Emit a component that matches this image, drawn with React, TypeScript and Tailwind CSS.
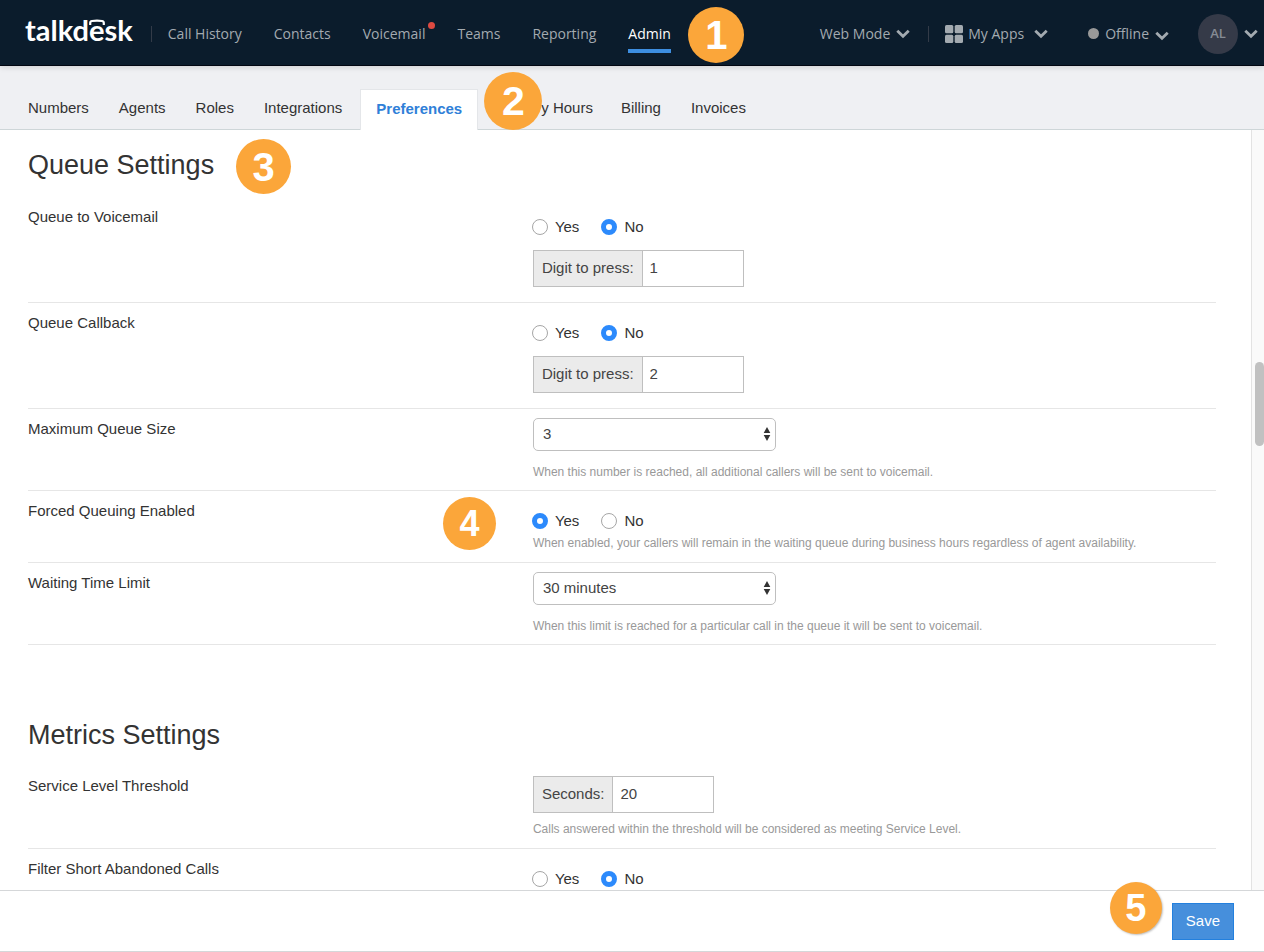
import React, { useId, useState } from "react";

function Chevron() {
  return (
    <svg viewBox="0 0 14 10" className="h-[10px] w-[14px] shrink-0" fill="none" stroke="#a3aab0" strokeWidth="2.800" aria-hidden="true">
      <path d="M1.300 1.800 7 7.300l5.700-5.500" />
    </svg>
  );
}

function Step({ n, className }: { n: number; className: string }) {
  return (
    <span className={`absolute z-10 flex items-center justify-center rounded-full bg-[#fba63a] font-['Liberation_Sans',sans-serif] font-bold leading-none text-white ${className}`}>
      {n}
    </span>
  );
}

function Logo() {
  return (
    <a href="#home" className="flex pb-[7px] font-['Lato',sans-serif] text-[29px] font-bold leading-8 text-white">
      talkd
      <span className="relative">
        e
        <svg viewBox="0 0 16 7" className="absolute left-0 top-[5px] h-[7px] w-4" fill="none" stroke="#fff" strokeWidth="2.200" aria-hidden="true">
          <path d="M1.200 6V4Q1.200 2.200 3 2.000Q8 1.400 13 2.000Q14.800 2.200 14.800 4V6" />
        </svg>
      </span>
      sk
    </a>
  );
}

function Header() {
  return (
    <header className="relative z-10 flex h-[66px] shrink-0 items-center border-b border-[#020712] bg-[#0b1c2c] pl-[25px] pr-[6px] pt-[2px] font-['Open_Sans',sans-serif] text-sm text-[#a3aab0] shadow-[0_1px_6px_rgba(0,0,0,0.15)]">
      <Logo />
      <span className="ml-[18px] mr-4 h-4 w-px bg-[#333b48]" />
      <nav className="flex items-center gap-8 whitespace-nowrap">
        <a href="#history">Call History</a>
        <a href="#contacts">Contacts</a>
        <a href="#voicemail" className="relative">
          Voicemail
          <span className="absolute -right-[10px] -top-[2px] size-[7px] rounded-full bg-[#dd4a41]" />
        </a>
        <a href="#teams">Teams</a>
        <a href="#reporting">Reporting</a>
        <a href="#admin" className="relative text-white">
          Admin
          <span className="absolute inset-x-0 -bottom-[9px] h-1 bg-[#3d8ee0]" />
          <Step n={1} className="-top-[17px] left-[60px] size-14 text-[40px]" />
        </a>
      </nav>
      <div className="ml-auto flex items-center whitespace-nowrap">
        <button type="button" className="flex items-center gap-[6px]">
          Web Mode <Chevron />
        </button>
        <span className="ml-[18px] mr-4 h-4 w-px bg-[#333b48]" />
        <button type="button" className="flex items-center">
          <svg viewBox="0 0 18 18" className="mr-[5px] size-[18px]" fill="#a3aab0" aria-hidden="true">
            <rect width="8.300" height="8.300" rx="1.500" />
            <rect x="9.700" width="8.300" height="8.300" rx="1.500" />
            <rect y="9.700" width="8.300" height="8.300" rx="1.500" />
            <rect x="9.700" y="9.700" width="8.300" height="8.300" rx="1.500" />
          </svg>
          <span className="mr-[10px]">My Apps</span>
          <Chevron />
        </button>
        <button type="button" className="ml-10 flex items-center">
          <span className="mr-[6px] size-[11px] rounded-full bg-[#999]" />
          <span className="mr-[6px]">Offline</span>
          <span className="pt-1"><Chevron /></span>
        </button>
        <button type="button" className="ml-[29px] flex items-center gap-[6px]">
          <span className="flex size-10 items-center justify-center rounded-full bg-[#353a48] text-[13px] font-semibold text-[#858b94]">AL</span>
          <Chevron />
        </button>
      </div>
    </header>
  );
}

function Tabs() {
  const tab = "px-[15px] pb-[11px]";
  return (
    <nav className="relative flex h-16 shrink-0 items-end whitespace-nowrap border-b border-[#ced6d8] bg-[#eff0f3] pl-[13px] text-[15px] leading-5 text-[#333]">
      <a href="#numbers" className={tab}>Numbers</a>
      <a href="#agents" className={tab}>Agents</a>
      <a href="#roles" className={tab}>Roles</a>
      <a href="#integrations" className={tab}>Integrations</a>
      <a href="#preferences" aria-current="page" className="relative -mb-px ml-[3px] border border-b-0 border-[#e4e6e9] bg-white px-[15px] pb-[11px] pt-[9px] font-bold text-[#2f80d8]">
        Preferences
        <Step n={2} className="-top-[18px] left-[123px] size-[58px] text-[41px]" />
      </a>
      <a href="#hours" className="pb-[11px] pl-[63px] pr-[13px]">y Hours</a>
      <a href="#billing" className={tab}>Billing</a>
      <a href="#invoices" className={tab}>Invoices</a>
    </nav>
  );
}

function Row({ label, children, className = "" }: { label: string; children: React.ReactNode; className?: string }) {
  return (
    <div className={`grid grid-cols-[17fr_23fr] border-b border-[#e6e6e6] ${className}`}>
      <h3 className="pt-[10px] text-[15px] leading-5">{label}</h3>
      <div>{children}</div>
    </div>
  );
}

function YesNo({ label, initial }: { label: string; initial: "Yes" | "No" }) {
  const name = useId();
  const [value, setValue] = useState<string>(initial);
  return (
    <div role="radiogroup" aria-label={label} className="-ml-px flex gap-[22px] pt-5 text-[15px] leading-5">
      {["Yes", "No"].map((option) => (
        <label key={option} className="flex items-center gap-[7px]">
          <input
            type="radio"
            name={name}
            checked={value === option}
            onChange={() => setValue(option)}
            className="size-4 appearance-none rounded-full border border-[#a6a6a6] bg-white checked:border-[5px] checked:border-[#2c8afc]"
          />
          {option}
        </label>
      ))}
    </div>
  );
}

function Field({ label, value }: { label: string; value: string }) {
  const id = useId();
  return (
    <div className="flex h-[37px] text-[15px] text-[#444]">
      <label htmlFor={id} className="flex items-center border border-[#bfbfbf] bg-[#ebebeb] px-2">{label}</label>
      <input id={id} defaultValue={value} className="w-[101px] border border-l-0 border-[#bfbfbf] bg-white px-[7px]" />
    </div>
  );
}

function Choice({ label, options }: { label: string; options: string[] }) {
  return (
    <div className="relative mt-[9px] w-[243px]">
      <select aria-label={label} className="block h-[33px] w-full appearance-none rounded-[5px] border border-[#bfbfbf] bg-white px-[9px] text-[15px] text-[#444]">
        {options.map((o) => <option key={o}>{o}</option>)}
      </select>
      <svg viewBox="0 0 8 14" className="pointer-events-none absolute right-[5px] top-[9px] h-[14px] w-2" fill="#333" aria-hidden="true">
        <path d="M4 0 7.300 6H.7zM4 14 .7 8h6.600z" />
      </svg>
    </div>
  );
}

function Hint({ children, className = "" }: { children: React.ReactNode; className?: string }) {
  return <p className={`text-xs leading-4 text-[#999] ${className}`}>{children}</p>;
}

export default function App() {
  return (
    <div className="flex h-screen flex-col overflow-hidden bg-white font-['Liberation_Sans',sans-serif] text-[#333]">
      <Header />
      <Tabs />
      <div className="flex min-h-0 flex-1">
        <main className="min-w-0 flex-1 overflow-hidden pl-7 pr-[35px]">
          <section className="pb-[69px]">
            <h2 className="flex h-[67px] items-center pt-[3px] text-[27px] leading-8">
              <span className="relative">
                Queue Settings
                <Step n={3} className="-top-[10px] left-[208px] size-[55px] text-[40px]" />
              </span>
            </h2>
            <Row label="Queue to Voicemail">
              <YesNo label="Queue to Voicemail" initial="No" />
              <div className="pb-[15px] pt-[13px]"><Field label="Digit to press:" value="1" /></div>
            </Row>
            <Row label="Queue Callback">
              <YesNo label="Queue Callback" initial="No" />
              <div className="pb-[15px] pt-[13px]"><Field label="Digit to press:" value="2" /></div>
            </Row>
            <Row label="Maximum Queue Size">
              <Choice label="Maximum Queue Size" options={["3", "5", "10"]} />
              <Hint className="pb-[10px] pt-[13px]">When this number is reached, all additional callers will be sent to voicemail.</Hint>
            </Row>
            <Row label="Forced Queuing Enabled">
              <div className="relative">
                <Step n={4} className="-left-[90px] top-[6px] size-[53px] text-[36px]" />
                <YesNo label="Forced Queuing Enabled" initial="Yes" />
              </div>
              <Hint className="pb-[11px] pt-1">When enabled, your callers will remain in the waiting queue during business hours regardless of agent availability.</Hint>
            </Row>
            <Row label="Waiting Time Limit">
              <Choice label="Waiting Time Limit" options={["30 minutes", "60 minutes"]} />
              <Hint className="pb-[10px] pt-[13px]">When this limit is reached for a particular call in the queue it will be sent to voicemail.</Hint>
            </Row>
          </section>
          <section>
            <h2 className="pb-[15px] pt-[5px] text-[27px] leading-8">Metrics Settings</h2>
            <Row label="Service Level Threshold">
              <div className="pt-[10px]"><Field label="Seconds:" value="20" /></div>
              <Hint className="pb-[11px] pt-2">Calls answered within the threshold will be considered as meeting Service Level.</Hint>
            </Row>
            <Row label="Filter Short Abandoned Calls" className="pb-8">
              <YesNo label="Filter Short Abandoned Calls" initial="No" />
            </Row>
          </section>
        </main>
        <div className="w-[13px] shrink-0 border-l border-[#e3e3e3] bg-[#fafafa] pl-[3px] pt-[232px]">
          <div className="h-[84px] rounded-full bg-[#c1c1c1]" />
        </div>
      </div>
      <footer className="flex h-[62px] shrink-0 items-center justify-end border-y border-[#d5d7d9] bg-white pr-[30px]">
        <div className="relative">
          <Step n={5} className="-left-[62px] -top-[21px] size-[52px] text-[38px] shadow-[1px_1px_2px_rgba(0,0,0,0.25)]" />
          <button type="button" className="h-[37px] border border-[#2380de] bg-[#468fdc] px-[13px] text-[15px] text-white">Save</button>
        </div>
      </footer>
    </div>
  );
}
